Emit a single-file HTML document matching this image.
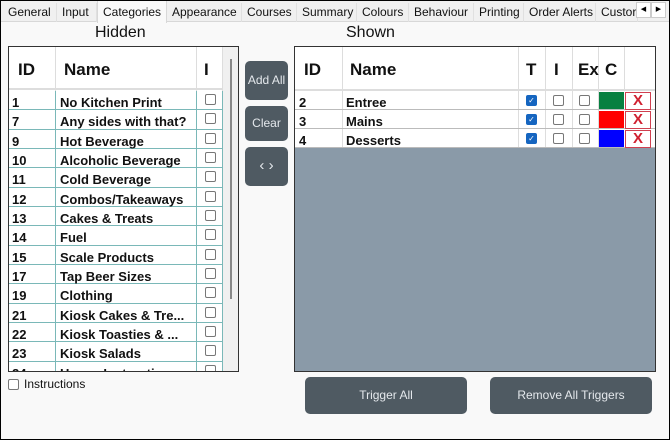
<!DOCTYPE html>
<html><head><style>
*{box-sizing:border-box;margin:0;padding:0}
body{width:670px;height:440px;overflow:hidden;background:#f9f9f9;font-family:"Liberation Sans",sans-serif;position:relative}
.frame{position:absolute;left:0;top:0;width:670px;height:440px;border:1px solid #000;pointer-events:none}
.tabs{position:absolute;left:0;top:0;width:670px;height:22px;background:#f0f0f0;border-bottom:1px solid #d8d8d8}
.tab{position:absolute;top:3px;height:19px;font-size:12px;color:#111;line-height:19px;border-right:1px solid #e0e0e0;padding-left:5px}
.tab.sel{top:0;height:23px;background:#f9f9f9;border:1px solid #d8d8d8;border-bottom:none;line-height:22px}
.h{position:absolute;font-size:16px;color:#111;top:24px}
.a{position:absolute}
.bold{font-weight:bold;color:#111;font-size:13px}
.cb{position:absolute;width:11px;height:11px;border:1px solid #777;border-radius:2px;background:#fff}
.cbc{position:absolute;width:11px;height:11px;border-radius:2px;background:#1565c0;color:#fff;font-size:8px;line-height:11px;text-align:center}
.btn{position:absolute;background:#4f5a62;border-radius:5px;color:#e4e8ec;font-size:12px;text-align:center}
</style></head><body>
<div class="tabs">
<div class="tab" style="left:3px;width:54px">General</div>
<div class="tab" style="left:57px;width:40px">Input</div>
<div class="tab sel" style="left:97px;width:70px">Categories</div>
<div class="tab" style="left:167px;width:75px">Appearance</div>
<div class="tab" style="left:242px;width:55px">Courses</div>
<div class="tab" style="left:297px;width:60px">Summary</div>
<div class="tab" style="left:357px;width:52px">Colours</div>
<div class="tab" style="left:409px;width:65px">Behaviour</div>
<div class="tab" style="left:474px;width:50px">Printing</div>
<div class="tab" style="left:524px;width:72px">Order Alerts</div>
<div class="tab" style="left:596px;width:42px;overflow:hidden;white-space:nowrap">Custor</div>
<div class="a" style="left:636px;top:2px;width:15px;height:16px;background:#fff;border:1px solid #ccc;font-size:7px;text-align:center;line-height:14px">◀</div>
<div class="a" style="left:651px;top:2px;width:15px;height:16px;background:#fff;border:1px solid #ccc;font-size:7px;text-align:center;line-height:14px">▶</div>
</div>
<div class="h" style="left:95px">Hidden</div>
<div class="h" style="left:346px">Shown</div>

<div class="a" style="left:8px;top:46px;width:231px;height:326px;border:1px solid #333;background:#fff;overflow:hidden">
<div class="a" style="left:0;top:0;width:214px;height:43px;border-bottom:2px solid #ddd"></div>
<div class="a" style="left:46px;top:0;width:1px;height:326px;background:#ddd"></div>
<div class="a" style="left:187px;top:0;width:1px;height:326px;background:#ddd"></div>
<div class="a" style="left:213px;top:0;width:1px;height:326px;background:#ddd"></div>
<div class="a bold" style="left:9px;top:13px;font-size:17px">ID</div>
<div class="a bold" style="left:55px;top:13px;font-size:17px">Name</div>
<div class="a bold" style="left:195px;top:13px;font-size:17px">I</div>
<div class="a" style="left:214px;top:0;width:16px;height:326px;background:#f0f0f0"></div>
<div class="a" style="left:221px;top:12px;width:2px;height:240px;background:#888"></div>
<div id="rows"></div>
</div>

<div class="btn" style="left:245px;top:61px;width:43px;height:39px;line-height:39px">Add All</div>
<div class="btn" style="left:245px;top:106px;width:43px;height:35px;line-height:35px">Clear</div>
<div class="btn" style="left:245px;top:147px;width:43px;height:39px;line-height:37px;font-size:15px">&lsaquo; &rsaquo;</div>

<div class="a" style="left:294px;top:46px;width:362px;height:326px;border:1px solid #333;background:#8a9aa8;overflow:hidden">
<div class="a" style="left:0;top:0;width:362px;height:101px;background:#fff"></div>
<div class="a" style="left:0;top:0;width:360px;height:44px;border-bottom:2px solid #ddd"></div>
<div class="a" style="left:47px;top:0;width:1px;height:101px;background:#ddd"></div>
<div class="a" style="left:223px;top:0;width:1px;height:101px;background:#ddd"></div>
<div class="a" style="left:250px;top:0;width:1px;height:101px;background:#ddd"></div>
<div class="a" style="left:277px;top:0;width:1px;height:101px;background:#ddd"></div>
<div class="a" style="left:303px;top:0;width:1px;height:101px;background:#ddd"></div>
<div class="a" style="left:329px;top:0;width:1px;height:44px;background:#ddd"></div>
<div class="a bold" style="left:9px;top:13px;font-size:17px">ID</div>
<div class="a bold" style="left:55px;top:13px;font-size:17px">Name</div>
<div class="a bold" style="left:231px;top:13px;font-size:17px">T</div>
<div class="a bold" style="left:259px;top:13px;font-size:17px">I</div>
<div class="a bold" style="left:283px;top:13px;font-size:17px">Ex</div>
<div class="a bold" style="left:310px;top:13px;font-size:17px">C</div>
<div id="rrows"></div>
</div>

<div class="cb" style="left:8px;top:379px;width:11px;height:11px"></div>
<div class="a" style="left:24px;top:377px;font-size:12px;color:#111">Instructions</div>

<div class="btn" style="left:305px;top:377px;width:162px;height:37px;line-height:37px">Trigger All</div>
<div class="btn" style="left:490px;top:377px;width:162px;height:37px;line-height:37px">Remove All Triggers</div>
<div class="frame"></div>
<script>
var d=[["1","No Kitchen Print"],["7","Any sides with that?"],["9","Hot Beverage"],["10","Alcoholic Beverage"],["11","Cold Beverage"],["12","Combos/Takeaways"],["13","Cakes & Treats"],["14","Fuel"],["15","Scale Products"],["17","Tap Beer Sizes"],["19","Clothing"],["21","Kiosk Cakes & Tre..."],["22","Kiosk Toasties & ..."],["23","Kiosk Salads"],["24","Honey Instructions"]];
var h="";d.forEach(function(r,i){var t=44+i*19.33;
h+='<div class="a" style="left:0;top:'+t+'px;width:213px;height:19.33px;border-bottom:1px solid #7ab8b8"></div>';
h+='<div class="a bold" style="left:3px;top:'+(t+4)+'px">'+r[0]+'</div>';
h+='<div class="a bold" style="left:51px;top:'+(t+4)+'px">'+r[1].replace(/&/g,"&amp;")+'</div>';
h+='<div class="cb" style="left:196px;top:'+(t+3)+'px"></div>';});
h+='<div class="a" style="left:46px;top:44px;width:1px;height:282px;background:#7ab8b8"></div><div class="a" style="left:187px;top:44px;width:1px;height:282px;background:#7ab8b8"></div><div class="a" style="left:213px;top:44px;width:1px;height:282px;background:#7ab8b8"></div>';
document.getElementById("rows").innerHTML=h;
var r=[["2","Entree","#078040"],["3","Mains","#ff0000"],["4","Desserts","#0000ff"]];h="";
r.forEach(function(x,i){var t=44+i*19;
h+='<div class="a" style="left:0;top:'+t+'px;width:360px;height:19px;border-bottom:1px solid #bbb"></div>';
h+='<div class="a bold" style="left:4px;top:'+(t+4)+'px">'+x[0]+'</div>';
h+='<div class="a bold" style="left:51px;top:'+(t+4)+'px">'+x[1]+'</div>';
h+='<div class="cbc" style="left:231px;top:'+(t+4)+'px">✓</div>';
h+='<div class="cb" style="left:258px;top:'+(t+4)+'px"></div>';
h+='<div class="cb" style="left:284px;top:'+(t+4)+'px"></div>';
h+='<div class="a" style="left:304px;top:'+(t+1)+'px;width:25px;height:17px;background:'+x[2]+'"></div>';
h+='<div class="a" style="left:330px;top:'+(t+1)+'px;width:26px;height:18px;background:#fff;border:1px solid #d04050;color:#d02030;font-weight:bold;font-size:15px;text-align:center;line-height:16px">X</div>';});
document.getElementById("rrows").innerHTML=h;
</script>
</body></html>
